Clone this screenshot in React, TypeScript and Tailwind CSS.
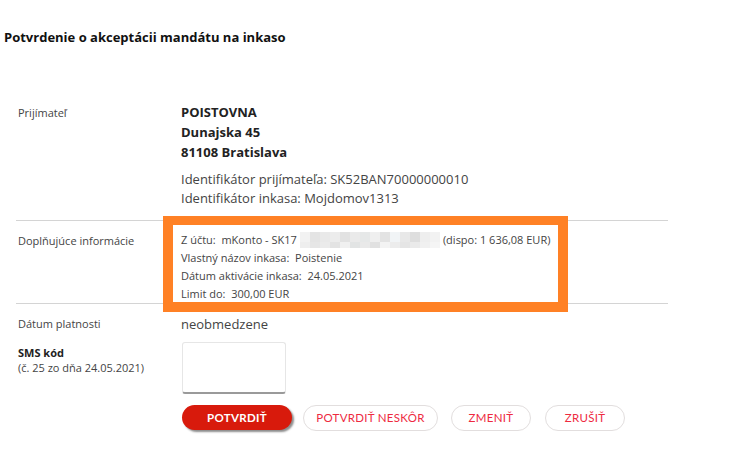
const blurTop = ["#f2f2f2", "#e4e4e4", "#e9e9e9", "#ececec", "#e2e2e2", "#eaeaea", "#e6e8e8", "#efefef", "#e3e3e3", "#f1f4f6", "#e8e8e8", "#dedede", "#eeeeee", "#f2f2f2"];
const blurBottom = ["#eeeeee", "#e6e6e6", "#ebebeb", "#e3e3e3", "#f0f0f0", "#e2e4e4", "#e9e9e9", "#e1e1e1", "#f3f3f3", "#ececec", "#e5e5e5", "#eaeaea", "#f0f0f0", "#f5f5f5"];

function Blurred() {
	return (
		<span className="inline-flex flex-col align-middle mx-[3px] w-[140px] h-[16px]">
			<span className="flex h-[10px]">
				{blurTop.map((c, i) => (
					<span key={i} className="flex-1" style={{ background: c }} />
				))}
			</span>
			<span className="flex h-[6px]">
				{blurBottom.map((c, i) => (
					<span key={i} className="flex-1" style={{ background: c }} />
				))}
			</span>
		</span>
	);
}

const btnFont = { fontFamily: "Lato, 'Noto Sans', sans-serif" };

export default function App() {
	return (
		<div
			className="relative w-[729px] h-[474px] bg-white text-[#333] overflow-hidden"
			style={{ fontFamily: "'Open Sans', 'Noto Sans', sans-serif" }}
		>
			<h1 className="pt-[28px] pl-[4px] text-[13px] leading-[18px] font-bold text-[#111]">
				Potvrdenie o akceptácii mandátu na inkaso
			</h1>

			<div className="ml-[16px] w-[652px] mt-[56px]">
				{/* Prijímateľ */}
				<div className="flex pb-[12px]">
					<div className="w-[165px] pl-[2px] pt-[3px] text-[11px] leading-[16px] text-[#444]">
						Prijímateľ
					</div>
					<div>
						<div className="text-[13px] leading-[20px] font-bold text-[#222]">
							<div>POISTOVNA</div>
							<div>Dunajska 45</div>
							<div>81108 Bratislava</div>
						</div>
						<div className="mt-[8px] text-[13px] leading-[19px] text-[#444]">
							<div>Identifikátor prijímateľa: SK52BAN70000000010</div>
							<div>Identifikátor inkasa: Mojdomov1313</div>
						</div>
					</div>
				</div>

				{/* Doplňujúce informácie */}
				<div className="flex border-t border-b border-[#d4d4d4] pt-[10px]">
					<div className="w-[165px] pl-[2px] pt-[1px] text-[11px] leading-[18px] text-[#444]">
						Doplňujúce informácie
					</div>
					<div className="text-[11px] leading-[18px] text-[#444]">
						<div className="flex items-center">
							Z účtu:&nbsp; mKonto - SK17
							<Blurred />
							(dispo: 1 636,08 EUR)
						</div>
						<div>Vlastný názov inkasa:&nbsp; Poistenie</div>
						<div>Dátum aktivácie inkasa:&nbsp; 24.05.2021</div>
						<div>Limit do:&nbsp; 300,00 EUR</div>
					</div>
				</div>

				{/* Dátum platnosti */}
				<div className="flex pt-[10px]">
					<div className="w-[165px] pl-[2px] pt-[2px] text-[11px] leading-[16px] text-[#444]">
						Dátum platnosti
					</div>
					<div className="text-[13px] leading-[20px] text-[#444]">neobmedzene</div>
				</div>

				{/* SMS kód */}
				<div className="flex mt-[8px]">
					<div className="w-[165px] pl-[2px] pt-[3px] text-[11px] leading-[15px] text-[#444]">
						<div className="font-bold text-[#222]">SMS kód</div>
						<div>(č. 25 zo dňa 24.05.2021)</div>
					</div>
					<div>
						<div className="ml-[1px] w-[104px] h-[52px] rounded-[3px] border border-[#e6e6e6] border-b-[2px] border-b-[#9a9a9a] bg-white" />
					</div>
				</div>

				<div className="flex ml-[166px] mt-[11px] text-[11.5px]" style={btnFont}>
					<button className="w-[110px] h-[25px] rounded-full bg-[#d81a0c] text-white font-bold tracking-[0.3px] shadow-[2px_2px_2px_rgba(0,0,0,0.45)]">
						POTVRDIŤ
					</button>
					<button className="ml-[11px] w-[135px] h-[26px] rounded-full border border-[#e2dede] text-[#ee2a3f] tracking-[0.3px]">
						POTVRDIŤ NESKÔR
					</button>
					<button className="ml-[13px] w-[80px] h-[26px] rounded-full border border-[#e2dede] text-[#ee2a3f] tracking-[0.3px]">
						ZMENIŤ
					</button>
					<button className="ml-[14px] w-[80px] h-[26px] rounded-full border border-[#e2dede] text-[#ee2a3f] tracking-[0.3px]">
						ZRUŠIŤ
					</button>
				</div>
			</div>

			{/* orange highlight annotation */}
			<div className="absolute left-[163px] top-[216px] w-[405px] h-[96px] border-[10px] border-t-[9px] border-[#ff8125] pointer-events-none" />
		</div>
	);
}
